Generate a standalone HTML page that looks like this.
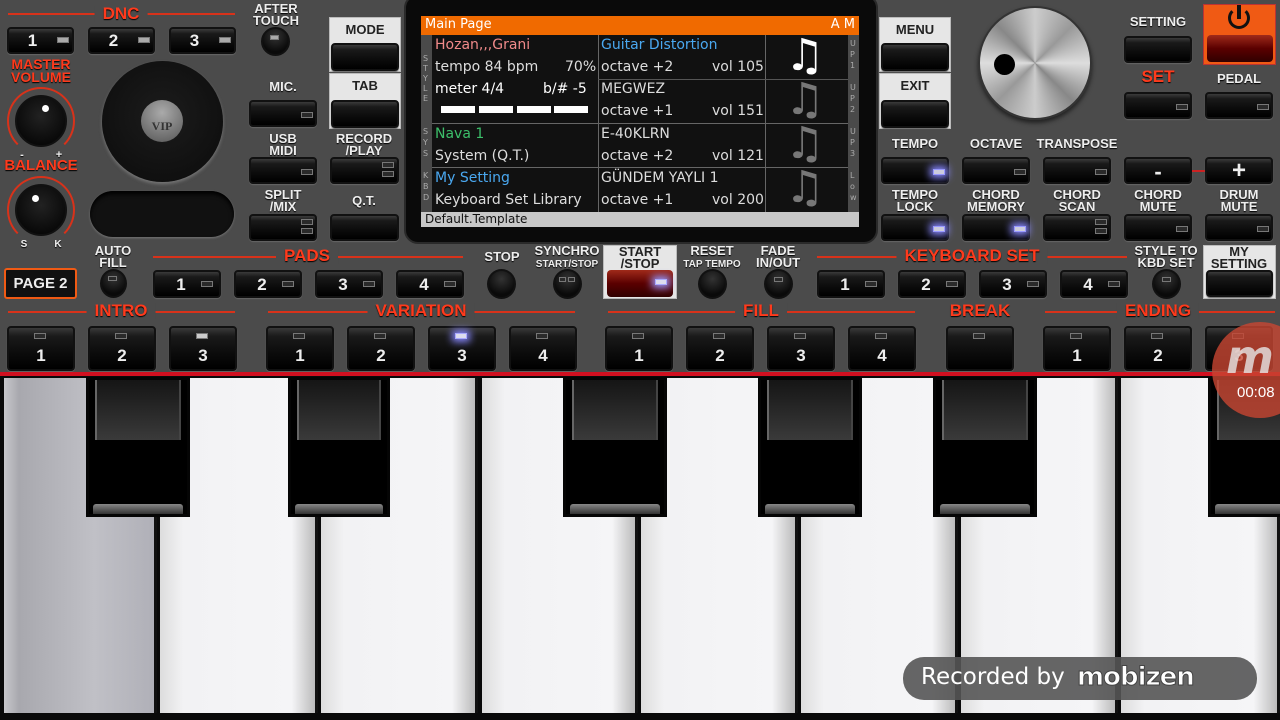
<!DOCTYPE html>
<html><head><meta charset="utf-8"><style>
*{margin:0;padding:0;box-sizing:border-box}
body{width:1280px;height:720px;overflow:hidden;background:#4b4b4b;position:relative;font-family:"Liberation Sans",sans-serif;font-weight:bold}
.a{position:absolute}
.b{position:absolute;border-radius:4px;background:linear-gradient(#3a3a3a 0%,#1a1a1a 20%,#0c0c0c 60%,#000 100%);border:2px solid #111;box-shadow:0 1px 1px #666}
.led{position:absolute;width:12px;height:6px;border:1px solid #777;background:#2a2a2a}
.lbl{position:absolute;color:#eee;font-size:13px;text-align:center;line-height:12px;transform:translateX(-50%);white-space:nowrap;text-shadow:0 1px 1px #000}
.red{color:#ff3a1c;font-size:17px}
.rl{position:absolute;height:2px;background:#d8321a}
.num{position:absolute;color:#eee;font-size:17px;width:100%;text-align:center}
.rnd{position:absolute;border-radius:50%;background:radial-gradient(circle at 50% 30%,#333,#0a0a0a 70%);border:2px solid #111}
.lb{position:absolute;background:#e6e6e6;border:1px solid #bbb}
.scr div{position:absolute}
.t{font-family:"DejaVu Sans",sans-serif;font-weight:normal;font-size:14px;color:#ddd;white-space:nowrap}
.wk{position:absolute;background:linear-gradient(90deg,#ddd,#f2f2f4 15%,#f5f5f7 85%,#bbb);border-right:3px solid #111}
.bk{position:absolute;top:377px;height:140px;background:#000;border:3px solid #050505}
.bk i{position:absolute;left:6px;right:6px;top:0;height:60px;background:linear-gradient(#151515,#3a3a3a);border-left:2px solid #666;border-right:2px solid #444}
.bk s{position:absolute;left:4px;right:4px;bottom:0;height:10px;background:linear-gradient(#888,#333);border-radius:3px 3px 0 0}
</style></head><body>

<!-- DNC -->
<div class="rl" style="left:8px;top:13px;width:227px"></div>
<div class="lbl red" style="left:121px;top:6px;background:#4b4b4b;padding:0 8px;line-height:16px">DNC</div>
<div class="b" style="left:7px;top:27px;width:67px;height:27px"><div class="num" style="top:2px;left:-8px">1</div><div class="led" style="left:48px;top:8px;background:#aaa"></div></div>
<div class="b" style="left:88px;top:27px;width:67px;height:27px"><div class="num" style="top:2px;left:-8px">2</div><div class="led" style="left:48px;top:8px;background:#aaa"></div></div>
<div class="b" style="left:169px;top:27px;width:67px;height:27px"><div class="num" style="top:2px;left:-8px">3</div><div class="led" style="left:48px;top:8px;background:#aaa"></div></div>
<div class="lbl" style="left:276px;top:3px">AFTER<br>TOUCH</div>
<div class="rnd" style="left:261px;top:27px;width:29px;height:29px"><div class="led" style="left:7px;top:6px;width:9px;height:5px;background:#aaa"></div></div>

<div class="lbl red" style="left:41px;top:58px;font-size:14px;line-height:13px">MASTER<br>VOLUME</div>
<div class="a" style="left:7px;top:87px;width:68px;height:68px;border-radius:50%;border:2px solid #d8321a;border-bottom-color:transparent"></div>
<div class="rnd" style="left:15px;top:95px;width:52px;height:52px;background:radial-gradient(circle at 50% 40%,#222,#000)"></div>
<div class="a" style="left:42px;top:105px;width:7px;height:7px;border-radius:50%;background:#fff"></div>
<div class="lbl" style="left:22px;top:149px;font-size:11px">-</div><div class="lbl" style="left:59px;top:149px;font-size:11px">+</div>
<div class="lbl red" style="left:41px;top:160px;font-size:15px">BALANCE</div>
<div class="a" style="left:7px;top:176px;width:68px;height:68px;border-radius:50%;border:2px solid #d8321a;border-bottom-color:transparent"></div>
<div class="rnd" style="left:15px;top:184px;width:52px;height:52px;background:radial-gradient(circle at 50% 40%,#222,#000)"></div>
<div class="a" style="left:32px;top:195px;width:7px;height:7px;border-radius:50%;background:#fff"></div>
<div class="lbl" style="left:24px;top:239px;font-size:10px">S</div><div class="lbl" style="left:58px;top:239px;font-size:10px">K</div>

<div class="a" style="left:102px;top:61px;width:121px;height:121px;border-radius:50%;background:radial-gradient(circle at 50% 45%,#1c1c1c,#0e0e0e 80%,#2a2a2a);box-shadow:0 2px 3px #777"></div>
<div class="a" style="left:141px;top:100px;width:42px;height:42px;border-radius:50%;background:radial-gradient(circle at 50% 30%,#aaa,#555);font-family:'Liberation Serif',serif;font-size:12px;color:#333;text-align:center;line-height:52px">VIP</div>
<div class="a" style="left:90px;top:191px;width:144px;height:46px;border-radius:23px;background:#111;box-shadow:inset 0 3px 4px #000,0 1px 2px #777"></div>

<div class="lbl" style="left:283px;top:81px">MIC.</div>
<div class="b" style="left:249px;top:100px;width:68px;height:27px"><div class="led" style="left:50px;top:10px"></div></div>
<div class="lbl" style="left:283px;top:133px">USB<br>MIDI</div>
<div class="b" style="left:249px;top:157px;width:68px;height:27px"><div class="led" style="left:50px;top:10px"></div></div>
<div class="lbl" style="left:283px;top:189px">SPLIT<br>/MIX</div>
<div class="b" style="left:249px;top:214px;width:68px;height:27px"><div class="led" style="left:50px;top:3px"></div><div class="led" style="left:50px;top:12px"></div></div>
<div class="lb" style="left:329px;top:17px;width:72px;height:55px"></div>
<div class="lbl" style="left:365px;top:24px;color:#222;text-shadow:none">MODE</div>
<div class="b" style="left:331px;top:43px;width:68px;height:28px"></div>
<div class="lb" style="left:329px;top:73px;width:72px;height:56px"></div>
<div class="lbl" style="left:365px;top:80px;color:#222;text-shadow:none">TAB</div>
<div class="b" style="left:331px;top:100px;width:68px;height:28px"></div>
<div class="lbl" style="left:364px;top:133px">RECORD<br>/PLAY</div>
<div class="b" style="left:330px;top:157px;width:69px;height:27px"><div class="led" style="left:50px;top:3px"></div><div class="led" style="left:50px;top:12px"></div></div>
<div class="lbl" style="left:364px;top:195px">Q.T.</div>
<div class="b" style="left:330px;top:214px;width:69px;height:27px"></div>

<!-- screen -->
<div class="a" style="left:404px;top:-6px;width:474px;height:250px;border-radius:14px;background:#0a0a0a;border:2px solid #2a2a2a"></div>
<div class="a scr" style="left:421px;top:16px;width:438px;height:211px;background:#111">
<div style="left:0;top:0;width:438px;height:19px;background:#f06a00"></div>
<div class="t" style="left:4px;top:1px;font-size:13px;color:#fff">Main Page</div>
<div class="t" style="right:4px;top:1px;font-size:13px;color:#fff">A M</div>
<div style="left:0;top:19px;width:11px;height:177px;background:#4a4a4a"></div>
<div style="left:427px;top:19px;width:11px;height:177px;background:#4a4a4a"></div>
<div style="left:0;top:196px;width:438px;height:15px;background:#c8c8c8"></div>
<div class="t" style="left:4px;top:196px;font-size:12px;color:#111">Default.Template</div>
<div style="left:177px;top:19px;width:1px;height:177px;background:#666"></div>
<div style="left:344px;top:19px;width:1px;height:177px;background:#666"></div>
<div style="left:177px;top:63px;width:250px;height:1px;background:#555"></div>
<div style="left:11px;top:107px;width:416px;height:1px;background:#666"></div>
<div style="left:11px;top:151px;width:416px;height:1px;background:#666"></div>
<div class="t" style="left:2px;top:38px;font-size:8px;line-height:10px;color:#aaa">S<br>T<br>Y<br>L<br>E</div>
<div class="t" style="left:2px;top:110px;font-size:8px;line-height:11px;color:#aaa">S<br>Y<br>S</div>
<div class="t" style="left:2px;top:154px;font-size:8px;line-height:11px;color:#aaa">K<br>B<br>D</div>
<div class="t" style="left:429px;top:22px;font-size:8px;line-height:11px;color:#aaa">U<br>P<br>1</div>
<div class="t" style="left:429px;top:66px;font-size:8px;line-height:11px;color:#aaa">U<br>P<br>2</div>
<div class="t" style="left:429px;top:110px;font-size:8px;line-height:11px;color:#aaa">U<br>P<br>3</div>
<div class="t" style="left:429px;top:154px;font-size:8px;line-height:11px;color:#aaa">L<br>o<br>w</div>
<div class="t" style="left:14px;top:21px;color:#f08a8a">Hozan,,,Grani</div>
<div class="t" style="left:14px;top:43px">tempo 84 bpm</div><div class="t" style="left:144px;top:43px">70%</div>
<div class="t" style="left:14px;top:65px;color:#fff">meter 4/4</div><div class="t" style="left:122px;top:65px;color:#fff">b/# -5</div>
<div style="left:20px;top:90px;width:34px;height:7px;background:#fff"></div><div style="left:58px;top:90px;width:34px;height:7px;background:#fff"></div><div style="left:96px;top:90px;width:34px;height:7px;background:#fff"></div><div style="left:133px;top:90px;width:34px;height:7px;background:#fff"></div>
<div class="t" style="left:14px;top:110px;color:#3cbf6a">Nava 1</div>
<div class="t" style="left:14px;top:132px">System (Q.T.)</div>
<div class="t" style="left:14px;top:154px;color:#4aa8f0">My Setting</div>
<div class="t" style="left:14px;top:176px">Keyboard Set Library</div>
<div class="t" style="left:180px;top:21px;color:#4aa8f0">Guitar Distortion</div>
<div class="t" style="left:180px;top:43px">octave +2</div><div class="t" style="left:291px;top:43px">vol 105</div>
<div class="t" style="left:180px;top:65px">MEGWEZ</div>
<div class="t" style="left:180px;top:87px">octave +1</div><div class="t" style="left:291px;top:87px">vol 151</div>
<div class="t" style="left:180px;top:110px">E-40KLRN</div>
<div class="t" style="left:180px;top:132px">octave +2</div><div class="t" style="left:291px;top:132px">vol 121</div>
<div class="t" style="left:180px;top:154px">GÜNDEM YAYLI 1</div>
<div class="t" style="left:180px;top:176px">octave +1</div><div class="t" style="left:291px;top:176px">vol 200</div>
<div class="t" style="left:364px;top:14px;font-size:44px;color:#fff">♫</div>
<div class="t" style="left:364px;top:58px;font-size:44px;color:#777">♫</div>
<div class="t" style="left:364px;top:102px;font-size:44px;color:#777">♫</div>
<div class="t" style="left:364px;top:146px;font-size:44px;color:#777">♫</div>
</div>

<!-- right -->
<div class="lb" style="left:879px;top:17px;width:72px;height:55px"></div>
<div class="lbl" style="left:915px;top:24px;color:#222;text-shadow:none">MENU</div>
<div class="b" style="left:881px;top:43px;width:68px;height:28px"></div>
<div class="lb" style="left:879px;top:73px;width:72px;height:56px"></div>
<div class="lbl" style="left:915px;top:80px;color:#222;text-shadow:none">EXIT</div>
<div class="b" style="left:881px;top:100px;width:68px;height:28px"></div>
<div class="a" style="left:978px;top:6px;width:114px;height:114px;border-radius:50%;background:conic-gradient(#ccc,#999,#ddd,#888,#ccc,#999,#ddd,#888,#ccc);border:2px solid #333;box-shadow:0 3px 4px #222"></div>
<div class="a" style="left:994px;top:54px;width:21px;height:21px;border-radius:50%;background:#000"></div>
<div class="lbl" style="left:1158px;top:16px">SETTING</div>
<div class="b" style="left:1124px;top:36px;width:68px;height:27px"></div>
<div class="a" style="left:1203px;top:4px;width:73px;height:61px;background:#f05a14;border:1px solid #b33"></div>
<div class="a" style="left:1228px;top:7px;width:22px;height:22px;border-radius:50%;border:3px solid #111;border-top-color:transparent"></div>
<div class="a" style="left:1237px;top:5px;width:4px;height:14px;background:#111"></div>
<div class="a" style="left:1207px;top:35px;width:66px;height:27px;border-radius:4px;background:linear-gradient(#a02a1a,#5a0000 50%,#300000)"></div>
<div class="lbl red" style="left:1158px;top:71px">SET</div>
<div class="lbl" style="left:1239px;top:73px">PEDAL</div>
<div class="b" style="left:1124px;top:92px;width:68px;height:27px"><div class="led" style="left:50px;top:10px"></div></div>
<div class="b" style="left:1205px;top:92px;width:68px;height:27px"><div class="led" style="left:50px;top:10px"></div></div>

<div class="lbl" style="left:915px;top:138px">TEMPO</div>
<div class="lbl" style="left:996px;top:138px">OCTAVE</div>
<div class="lbl" style="left:1077px;top:138px">TRANSPOSE</div>
<div class="b" style="left:881px;top:157px;width:68px;height:27px"><div class="led" style="left:50px;top:10px;background:#ccd;border-color:#99f;box-shadow:0 0 8px 3px #88f"></div></div>
<div class="b" style="left:962px;top:157px;width:68px;height:27px"><div class="led" style="left:50px;top:10px"></div></div>
<div class="b" style="left:1043px;top:157px;width:68px;height:27px"><div class="led" style="left:50px;top:10px"></div></div>
<div class="b" style="left:1124px;top:157px;width:68px;height:27px"><div class="num" style="top:0px;font-size:22px">-</div></div>
<div class="a" style="left:1192px;top:170px;width:13px;height:2px;background:#c22"></div>
<div class="b" style="left:1205px;top:157px;width:68px;height:27px"><div class="num" style="top:-2px;font-size:24px">+</div></div>
<div class="lbl" style="left:915px;top:189px">TEMPO<br>LOCK</div>
<div class="lbl" style="left:996px;top:189px">CHORD<br>MEMORY</div>
<div class="lbl" style="left:1077px;top:189px">CHORD<br>SCAN</div>
<div class="lbl" style="left:1158px;top:189px">CHORD<br>MUTE</div>
<div class="lbl" style="left:1239px;top:189px">DRUM<br>MUTE</div>
<div class="b" style="left:881px;top:214px;width:68px;height:27px"><div class="led" style="left:50px;top:10px;background:#ccd;border-color:#99f;box-shadow:0 0 8px 3px #88f"></div></div>
<div class="b" style="left:962px;top:214px;width:68px;height:27px"><div class="led" style="left:50px;top:10px;background:#ccd;border-color:#99f;box-shadow:0 0 8px 3px #88f"></div></div>
<div class="b" style="left:1043px;top:214px;width:68px;height:27px"><div class="led" style="left:50px;top:3px"></div><div class="led" style="left:50px;top:12px"></div></div>
<div class="b" style="left:1124px;top:214px;width:68px;height:27px"><div class="led" style="left:50px;top:10px"></div></div>
<div class="b" style="left:1205px;top:214px;width:68px;height:27px"><div class="led" style="left:50px;top:10px"></div></div>

<!-- row 3 -->
<div class="a" style="left:4px;top:268px;width:73px;height:31px;border:2px solid #f05a14;border-radius:3px;background:#111;color:#eee;font-size:15px;text-align:center;line-height:27px">PAGE 2</div>
<div class="lbl" style="left:113px;top:245px">AUTO<br>FILL</div>
<div class="rnd" style="left:100px;top:269px;width:27px;height:29px"><div class="led" style="left:6px;top:5px;width:9px;height:5px"></div></div>
<div class="rl" style="left:153px;top:256px;width:310px"></div>
<div class="lbl red" style="left:307px;top:248px;background:#4b4b4b;padding:0 8px;line-height:16px">PADS</div>
<div class="b" style="left:153px;top:270px;width:68px;height:28px"><div class="num" style="top:3px;left:-6px">1</div><div class="led" style="left:46px;top:9px"></div></div>
<div class="b" style="left:234px;top:270px;width:68px;height:28px"><div class="num" style="top:3px;left:-6px">2</div><div class="led" style="left:46px;top:9px"></div></div>
<div class="b" style="left:315px;top:270px;width:68px;height:28px"><div class="num" style="top:3px;left:-6px">3</div><div class="led" style="left:46px;top:9px"></div></div>
<div class="b" style="left:396px;top:270px;width:68px;height:28px"><div class="num" style="top:3px;left:-6px">4</div><div class="led" style="left:46px;top:9px"></div></div>
<div class="lbl" style="left:502px;top:251px">STOP</div>
<div class="rnd" style="left:487px;top:269px;width:29px;height:30px"></div>
<div class="lbl" style="left:567px;top:245px">SYNCHRO<br><span style="font-size:10px">START/STOP</span></div>
<div class="rnd" style="left:553px;top:269px;width:29px;height:30px"><div class="led" style="left:4px;top:6px;width:7px;height:5px"></div><div class="led" style="left:13px;top:6px;width:7px;height:5px"></div></div>
<div class="lb" style="left:603px;top:245px;width:74px;height:54px"></div>
<div class="lbl" style="left:640px;top:246px;color:#222;text-shadow:none">START<br>/STOP</div>
<div class="a" style="left:607px;top:270px;width:66px;height:27px;border-radius:4px;background:linear-gradient(#a02a1a,#5a0000 50%,#300000)"><div class="led" style="left:48px;top:9px;background:#dde;border-color:#aaf;box-shadow:0 0 8px 3px #99f"></div></div>
<div class="lbl" style="left:712px;top:245px">RESET<br><span style="font-size:10px">TAP TEMPO</span></div>
<div class="rnd" style="left:698px;top:269px;width:29px;height:30px"></div>
<div class="lbl" style="left:778px;top:245px">FADE<br>IN/OUT</div>
<div class="rnd" style="left:764px;top:269px;width:29px;height:30px"><div class="led" style="left:8px;top:6px;width:9px;height:5px"></div></div>
<div class="rl" style="left:817px;top:256px;width:310px"></div>
<div class="lbl red" style="left:972px;top:248px;background:#4b4b4b;padding:0 8px;line-height:16px">KEYBOARD SET</div>
<div class="b" style="left:817px;top:270px;width:68px;height:28px"><div class="num" style="top:3px;left:-6px">1</div><div class="led" style="left:46px;top:9px"></div></div>
<div class="b" style="left:898px;top:270px;width:68px;height:28px"><div class="num" style="top:3px;left:-6px">2</div><div class="led" style="left:46px;top:9px"></div></div>
<div class="b" style="left:979px;top:270px;width:68px;height:28px"><div class="num" style="top:3px;left:-6px">3</div><div class="led" style="left:46px;top:9px"></div></div>
<div class="b" style="left:1060px;top:270px;width:68px;height:28px"><div class="num" style="top:3px;left:-6px">4</div><div class="led" style="left:46px;top:9px"></div></div>
<div class="lbl" style="left:1166px;top:245px">STYLE TO<br>KBD SET</div>
<div class="rnd" style="left:1152px;top:269px;width:29px;height:30px"><div class="led" style="left:8px;top:6px;width:9px;height:5px"></div></div>
<div class="lb" style="left:1203px;top:245px;width:73px;height:54px"></div>
<div class="lbl" style="left:1239px;top:246px;color:#222;text-shadow:none">MY<br>SETTING</div>
<div class="b" style="left:1206px;top:270px;width:67px;height:27px"></div>

<!-- row 4 -->
<div class="rl" style="left:8px;top:311px;width:227px"></div>
<div class="lbl red" style="left:121px;top:303px;background:#4b4b4b;padding:0 8px;line-height:16px">INTRO</div>
<div class="rl" style="left:268px;top:311px;width:307px"></div>
<div class="lbl red" style="left:421px;top:303px;background:#4b4b4b;padding:0 8px;line-height:16px">VARIATION</div>
<div class="rl" style="left:608px;top:311px;width:307px"></div>
<div class="lbl red" style="left:761px;top:303px;background:#4b4b4b;padding:0 8px;line-height:16px">FILL</div>
<div class="lbl red" style="left:980px;top:303px;line-height:16px">BREAK</div>
<div class="rl" style="left:1045px;top:311px;width:230px"></div>
<div class="lbl red" style="left:1158px;top:303px;background:#4b4b4b;padding:0 8px;line-height:16px">ENDING</div>

<div class="b" style="left:7px;top:326px;width:68px;height:45px"><div class="led" style="left:25px;top:5px"></div><div class="num" style="top:18px">1</div></div>
<div class="b" style="left:88px;top:326px;width:68px;height:45px"><div class="led" style="left:25px;top:5px"></div><div class="num" style="top:18px">2</div></div>
<div class="b" style="left:169px;top:326px;width:68px;height:45px"><div class="led" style="left:25px;top:5px;background:#ccc"></div><div class="num" style="top:18px">3</div></div>
<div class="b" style="left:266px;top:326px;width:68px;height:45px"><div class="led" style="left:25px;top:5px"></div><div class="num" style="top:18px">1</div></div>
<div class="b" style="left:347px;top:326px;width:68px;height:45px"><div class="led" style="left:25px;top:5px"></div><div class="num" style="top:18px">2</div></div>
<div class="b" style="left:428px;top:326px;width:68px;height:45px"><div class="led" style="left:25px;top:5px;background:#dde;border-color:#aaf;box-shadow:0 0 8px 3px #88f"></div><div class="num" style="top:18px">3</div></div>
<div class="b" style="left:509px;top:326px;width:68px;height:45px"><div class="led" style="left:25px;top:5px"></div><div class="num" style="top:18px">4</div></div>
<div class="b" style="left:605px;top:326px;width:68px;height:45px"><div class="led" style="left:25px;top:5px"></div><div class="num" style="top:18px">1</div></div>
<div class="b" style="left:686px;top:326px;width:68px;height:45px"><div class="led" style="left:25px;top:5px"></div><div class="num" style="top:18px">2</div></div>
<div class="b" style="left:767px;top:326px;width:68px;height:45px"><div class="led" style="left:25px;top:5px"></div><div class="num" style="top:18px">3</div></div>
<div class="b" style="left:848px;top:326px;width:68px;height:45px"><div class="led" style="left:25px;top:5px"></div><div class="num" style="top:18px">4</div></div>
<div class="b" style="left:946px;top:326px;width:68px;height:45px"><div class="led" style="left:25px;top:5px"></div></div>
<div class="b" style="left:1043px;top:326px;width:68px;height:45px"><div class="led" style="left:25px;top:5px"></div><div class="num" style="top:18px">1</div></div>
<div class="b" style="left:1124px;top:326px;width:68px;height:45px"><div class="led" style="left:25px;top:5px"></div><div class="num" style="top:18px">2</div></div>
<div class="b" style="left:1205px;top:326px;width:68px;height:45px"><div class="led" style="left:25px;top:5px"></div><div class="num" style="top:18px">3</div></div>

<!-- piano -->
<div class="a" style="left:0;top:372px;width:1280px;height:348px;background:#0a0a0a"></div>
<div class="a" style="left:0;top:372px;width:1280px;height:4px;background:#d01020"></div>
<div class="wk" style="left:4px;top:378px;width:153px;height:335px;background:linear-gradient(90deg,#c8c8cc,#a8a8ae 10%,#c0c0c6 60%,#b0b0b8)"></div>
<div class="wk" style="left:160px;top:378px;width:158px;height:335px"></div>
<div class="wk" style="left:321px;top:378px;width:157px;height:335px"></div>
<div class="wk" style="left:482px;top:378px;width:156px;height:335px"></div>
<div class="wk" style="left:641px;top:378px;width:157px;height:335px"></div>
<div class="wk" style="left:801px;top:378px;width:157px;height:335px"></div>
<div class="wk" style="left:961px;top:378px;width:157px;height:335px"></div>
<div class="wk" style="left:1121px;top:378px;width:159px;height:335px"></div>
<div class="bk" style="left:86px;width:104px"><i></i><s></s></div>
<div class="bk" style="left:288px;width:102px"><i></i><s></s></div>
<div class="bk" style="left:563px;width:104px"><i></i><s></s></div>
<div class="bk" style="left:758px;width:104px"><i></i><s></s></div>
<div class="bk" style="left:933px;width:104px"><i></i><s></s></div>
<div class="bk" style="left:1208px;width:90px"><i></i><s></s></div>

<!-- overlays -->
<div class="a" style="left:1212px;top:322px;width:96px;height:96px;border-radius:50%;background:rgba(200,70,50,.8)"></div>
<div class="a" style="left:1226px;top:330px;color:rgba(230,230,230,.8);font-size:46px;font-style:italic;font-family:'DejaVu Sans',sans-serif">m</div>
<div class="a" style="left:1237px;top:384px;color:#fff;font-size:15px;font-weight:normal">00:08</div>
<div class="a" style="left:903px;top:657px;width:354px;height:43px;border-radius:21px;background:rgba(85,85,85,.9)"></div>
<div class="a" style="left:921px;top:664px;color:#fff;font-size:23px;font-weight:normal;font-family:'DejaVu Sans',sans-serif">Recorded by</div>
<div class="a" style="left:1077px;top:662px;color:#fff;font-size:26px;font-weight:bold;font-family:'DejaVu Sans',sans-serif;-webkit-text-stroke:1px #444;letter-spacing:-1px">mobizen</div>
</body></html>
